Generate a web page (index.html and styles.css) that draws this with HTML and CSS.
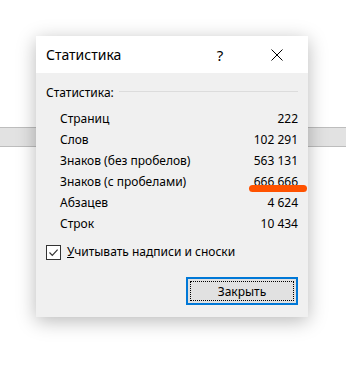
FILE: index.html
```html
<!DOCTYPE html>
<html lang="ru">
<head>
    <meta charset="UTF-8">
    <meta name="viewport" content="width=device-width, initial-scale=1.0">
    <title>Статистика</title>
    <link rel="stylesheet" href="styles.css">
</head>
<body>
    <!-- Ribbon strip behind the dialog -->
    <div class="back-strip"></div>

    <!-- Word count dialog -->
    <div class="dialog">
        <div class="title-bar">
            <span class="title-text">Статистика</span>
            <span class="title-btn help-btn">?</span>
            <span class="title-btn close-btn">
                <svg width="12" height="12" viewBox="0 0 12 12">
                    <path d="M0.5 0.5 L11.5 11.5 M11.5 0.5 L0.5 11.5" stroke="#000" stroke-width="1" fill="none"/>
                </svg>
            </span>
        </div>

        <div class="dialog-body">
            <div class="group-head">
                <span>Статистика:</span>
                <span class="group-line"></span>
            </div>

            <div class="stats">
                <div class="stat-row"><span>Страниц</span><span class="stat-value">222</span></div>
                <div class="stat-row"><span>Слов</span><span class="stat-value">102 291</span></div>
                <div class="stat-row"><span>Знаков (без пробелов)</span><span class="stat-value">563 131</span></div>
                <div class="stat-row">
                    <span>Знаков (с пробелами)</span>
                    <span class="stat-value marked">666 666<span class="marker"></span></span>
                </div>
                <div class="stat-row"><span>Абзацев</span><span class="stat-value">4 624</span></div>
                <div class="stat-row"><span>Строк</span><span class="stat-value">10 434</span></div>
            </div>

            <label class="check-row">
                <span class="check-box">
                    <svg width="11" height="11" viewBox="0 0 11 11">
                        <path d="M1.5 5.5 L4.3 8.3 L9.6 2.6" stroke="#333" stroke-width="1.2" fill="none"/>
                    </svg>
                </span>
                <span><u>У</u>читывать надписи и сноски</span>
            </label>

            <div class="button-row">
                <button class="close-button"><span class="focus-rect">Закрыть</span></button>
            </div>
        </div>
    </div>
</body>
</html>
```

FILE: styles.css
```css
/* Global styles */
body {
    margin: 0;
    padding: 0;
    background-color: #ffffff;
    font-family: "Noto Sans", "Open Sans", Arial, sans-serif;
    font-size: 12px;
    color: #000;
}

/* Gray strip behind the dialog */
.back-strip {
    margin-top: 127px;
    height: 18px;
    background-color: #e2e2e2;
    border-top: 1px solid #bdbdbd;
    border-bottom: 1px solid #bdbdbd;
}

/* Dialog window */
.dialog {
    position: absolute;
    top: 36px;
    left: 36px;
    width: 272px;
    background-color: #f0f0f0;
    box-shadow: 0 4px 18px rgba(0, 0, 0, 0.28);
}

.title-bar {
    display: flex;
    align-items: center;
    height: 37px;
    background-color: #ffffff;
    padding: 0 8px 0 10px;
}

.title-text {
    flex: 1;
    font-size: 14px;
}

.title-btn {
    width: 46px;
    display: flex;
    justify-content: center;
    align-items: center;
}

.help-btn {
    font-size: 15px;
    margin-right: 11px;
}

.dialog-body {
    padding: 12px 10px 12px 10px;
}

.group-head {
    display: flex;
    align-items: center;
    line-height: 16px;
}

.group-line {
    flex: 1;
    height: 1px;
    margin-left: 5px;
    margin-top: -3px;
    background-color: #dcdcdc;
}

.stats {
    margin-top: 7px;
    padding-left: 14px;
}

.stat-row {
    display: flex;
    justify-content: space-between;
    line-height: 21px;
}

.stat-value {
    position: relative;
}

/* Orange marker stroke under the number */
.marker {
    position: absolute;
    left: -5px;
    right: -9px;
    top: 14px;
    height: 7px;
    border-radius: 4px;
    background-color: #ff5200;
}

.check-row {
    display: flex;
    align-items: center;
    margin-top: 10px;
    line-height: 16px;
}

.check-box {
    width: 13px;
    height: 13px;
    border: 1px solid #333;
    background-color: #fff;
    display: flex;
    justify-content: center;
    align-items: center;
    margin-right: 6px;
}

.button-row {
    display: flex;
    justify-content: flex-end;
    margin-top: 17px;
}

.close-button {
    width: 112px;
    height: 28px;
    padding: 2px;
    border: 2px solid #0078d7;
    background-color: #e1e1e1;
    font-family: inherit;
    font-size: 12px;
    color: #000;
    display: flex;
}

.focus-rect {
    flex: 1;
    display: flex;
    justify-content: center;
    align-items: center;
    border: 1px dotted #000;
}
```
